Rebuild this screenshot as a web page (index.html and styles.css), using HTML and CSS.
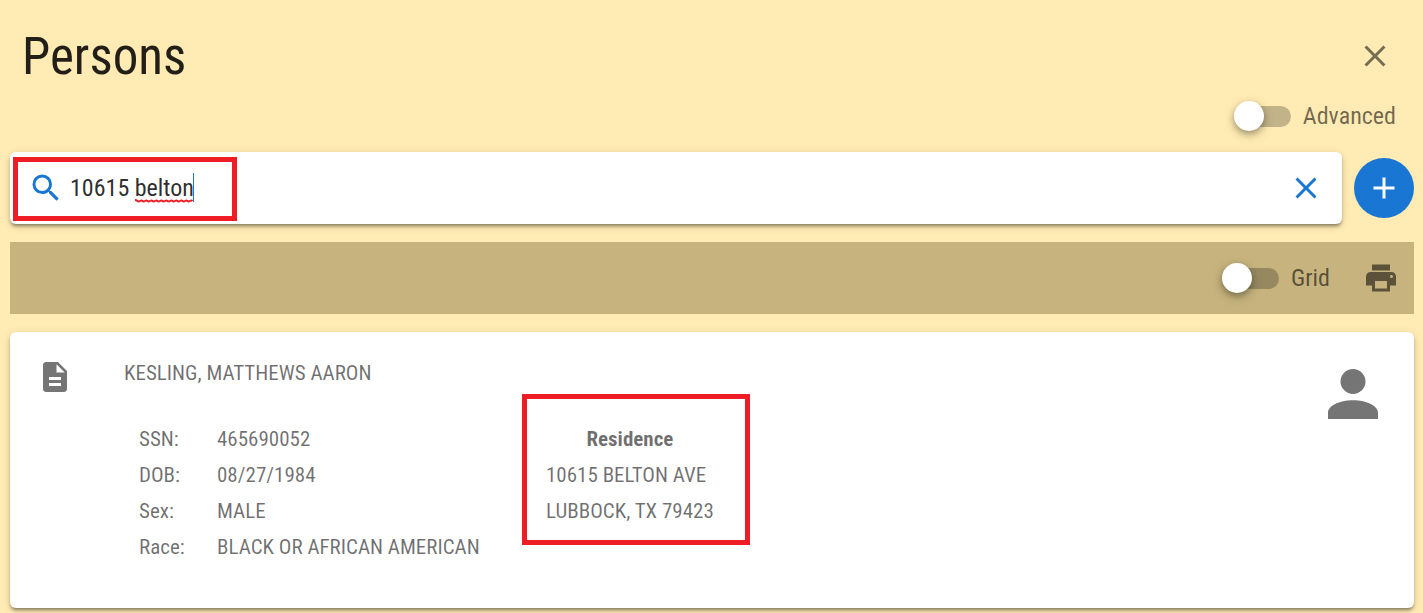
FILE: index.html
```html
<!DOCTYPE html>
<html lang="en">
<head>
<meta charset="utf-8">
<title>Persons</title>
<link rel="stylesheet" href="styles.css">
</head>
<body>
<main class="page">
  <header class="header">
    <h1 class="title">Persons</h1>
    <button class="icon-button close" aria-label="Close"><svg class="icon" viewBox="0 0 24 24"><path d="M19 6.4 17.6 5 12 10.6 6.4 5 5 6.4l5.6 5.6L5 17.6 6.4 19l5.6-5.6 5.6 5.6 1.4-1.4-5.6-5.6z"/></svg></button>
  </header>
  <div class="options">
    <label class="switch"><input type="checkbox" class="toggle" role="switch"><span>Advanced</span></label>
  </div>
  <div class="search-row">
    <div class="search">
      <label for="query" class="search-icon"><svg class="icon" viewBox="0 0 24 24" role="img" aria-label="Search"><path d="M15.5 14h-.79l-.28-.27A6.471 6.471 0 0 0 16 9.5 6.5 6.5 0 1 0 9.5 16c1.61 0 3.09-.59 4.23-1.57l.27.28v.79l5 4.99L20.49 19l-4.99-5zm-6 0C7.01 14 5 11.99 5 9.5S7.01 5 9.5 5 14 7.01 14 9.5 11.99 14 9.5 14z"/></svg></label>
      <div class="query-wrap">
        <input id="query" class="query" type="text" value="10615 belton" spellcheck="false">
        <svg class="squiggle" viewBox="0 0 58 4" aria-hidden="true"><path d="M0 1q1.5 0 2.5 1t2.5 0 2.5 0 2.5 0 2.5 0 2.5 0 2.5 0 2.5 0 2.5 0 2.5 0 2.5 0 2.5 0 2.5 0 2.5 0 2.5 0 2.5 0 2.5 0 2.5 0 2.5 0 2.5 0 2.5 0 2.5 0 2.5 0"/></svg>
        <span class="caret"></span>
      </div>
      <button class="icon-button clear" aria-label="Clear search"><svg class="icon" viewBox="0 0 24 24"><path d="M19 6.4 17.6 5 12 10.6 6.4 5 5 6.4l5.6 5.6L5 17.6 6.4 19l5.6-5.6 5.6 5.6 1.4-1.4-5.6-5.6z"/></svg></button>
      <span class="highlight highlight-search"></span>
    </div>
    <button class="add" aria-label="Add person"><svg class="icon" viewBox="0 0 24 24"><path d="M19 13h-6v6h-2v-6H5v-2h6V5h2v6h6z"/></svg></button>
  </div>
  <div class="toolbar">
    <label class="switch"><input type="checkbox" class="toggle" role="switch"><span>Grid</span></label>
    <button class="icon-button print" aria-label="Print"><svg class="icon" viewBox="0 0 24 24"><path d="M19 8H5c-1.66 0-3 1.34-3 3v6h4v4h12v-4h4v-6c0-1.66-1.34-3-3-3zm-3 11H8v-5h8v5zm3-7c-.55 0-1-.45-1-1s.45-1 1-1 1 .45 1 1-.45 1-1 1zm-1-9H6v4h12V3z"/></svg></button>
  </div>
  <article class="card">
    <svg class="icon doc" viewBox="0 0 24 24" aria-hidden="true"><path d="M14 2H6c-1.1 0-2 .9-2 2v16c0 1.1.9 2 2 2h12c1.1 0 2-.9 2-2V8l-6-6zm2 16H8v-2h8v2zm0-4H8v-2h8v2zm-3-5V3.5L18.500 9H13z"/></svg>
    <div class="person">
      <h2 class="name">KESLING, MATTHEWS AARON</h2>
      <div class="details">
        <dl class="facts">
          <dt>SSN:</dt><dd>465690052</dd>
          <dt>DOB:</dt><dd>08/27/1984</dd>
          <dt>Sex:</dt><dd>MALE</dd>
          <dt>Race:</dt><dd>BLACK OR AFRICAN AMERICAN</dd>
        </dl>
        <section class="residence">
          <h3 class="residence-title">Residence</h3>
          <p class="line">10615 BELTON AVE</p>
          <p class="line">LUBBOCK, TX 79423</p>
          <span class="highlight highlight-residence"></span>
        </section>
      </div>
    </div>
    <svg class="avatar" viewBox="4 4 16 16" aria-hidden="true"><path d="M12 4a4 4 0 1 1 0 8 4 4 0 0 1 0-8m0 10c4.42 0 8 1.79 8 4v2H4v-2c0-2.21 3.58-4 8-4z"/></svg>
  </article>
</main>
</body>
</html>
```
FILE: styles.css
```css
* { box-sizing: border-box; }
body {
  margin: 0;
  background: #ffebb3;
  color: rgba(0, 0, 0, 0.56);
  font-family: "Roboto Condensed", Roboto, sans-serif;
  font-size: 21px;
  line-height: 36px;
}
h1, h2, h3, p, dl, dd { margin: 0; font-weight: 400; }
button { border: 0; padding: 0; background: none; color: inherit; }
.page { padding: 20px 9px 5px 10px; }
.icon { display: block; width: 36px; height: 36px; fill: currentColor; }
.icon-button { width: 36px; height: 36px; color: rgba(0, 0, 0, 0.54); }
.header { display: flex; align-items: center; justify-content: space-between; height: 72px; padding: 0 21px 0 12px; }
.title { padding-top: 2px; font-size: 51px; line-height: 60px; color: rgba(0, 0, 0, 0.87); }
.options { display: flex; justify-content: flex-end; padding: 6px 18px 18px 0; }
.switch { display: flex; align-items: center; gap: 12px; font-size: 24px; line-height: 36px; }
.toggle {
  appearance: none;
  display: flex;
  align-items: center;
  width: 54px;
  height: 21px;
  margin: 0;
  border-radius: 11px;
  background: rgba(0, 0, 0, 0.24);
}
.toggle::before {
  content: "";
  width: 30px;
  height: 30px;
  flex: none;
  margin-left: -3px;
  border-radius: 50%;
  background: #fff;
  box-shadow: 0 3px 6px rgba(0, 0, 0, 0.3), 0 4px 14px rgba(0, 0, 0, 0.14);
}
.search-row { display: flex; align-items: center; gap: 12px; margin-bottom: 18px; }
.search {
  position: relative;
  display: flex;
  flex: 1;
  align-items: center;
  height: 72px;
  padding: 0 18px;
  border-radius: 6px;
  background: #fff;
  box-shadow: 0 4px 2px -3px rgba(0, 0, 0, 0.2), 0 3px 3px rgba(0, 0, 0, 0.24), 0 2px 8px rgba(0, 0, 0, 0.14);
}
.search-icon, .clear { color: #1976d2; }
.query-wrap { position: relative; flex: 1; padding-left: 6px; }
.query {
  display: block;
  width: 100%;
  height: 42px;
  padding: 0;
  border: 0;
  outline: 0;
  background: none;
  color: rgba(0, 0, 0, 0.84);
  font: inherit;
  font-size: 24px;
}
.squiggle { position: absolute; left: 71px; bottom: 6px; width: 58px; height: 4px; fill: none; stroke: #f01c24; stroke-width: 2; }
.caret { position: absolute; left: 129px; top: 6px; width: 1px; height: 29px; background: #1976d2; }
.add {
  display: flex;
  align-items: center;
  justify-content: center;
  width: 60px;
  height: 60px;
  border-radius: 50%;
  background: #1976d2;
  color: #fff;
}
.toolbar {
  display: flex;
  align-items: center;
  justify-content: flex-end;
  gap: 33px;
  height: 72px;
  margin-bottom: 18px;
  padding-right: 15px;
  background: #c6b37d;
}
.card {
  display: flex;
  align-items: flex-start;
  padding: 23px 36px 43px 27px;
  border-radius: 6px;
  background: #fff;
  box-shadow: 0 4px 2px -3px rgba(0, 0, 0, 0.2), 0 3px 3px rgba(0, 0, 0, 0.24), 0 2px 8px rgba(0, 0, 0, 0.14);
}
.doc { margin-top: 4px; color: #757575; }
.person { flex: 1; padding-left: 51px; }
.name { font-size: 21px; line-height: 36px; margin-bottom: 30px; }
.details { display: flex; gap: 63px; padding-left: 15px; }
.facts { display: grid; grid-template-columns: 78px 266px; white-space: nowrap; }
.residence { position: relative; }
.residence-title { font-size: 21px; font-weight: 700; text-align: center; }
.avatar { width: 50px; height: 50px; margin-top: 14px; fill: #757575; }
.highlight { position: absolute; border: 5px solid #ee1c25; pointer-events: none; }
.highlight-search { left: 3px; top: 5px; width: 224px; height: 64px; }
.highlight-residence { left: -24px; top: -27px; width: 228px; height: 151px; }
```
